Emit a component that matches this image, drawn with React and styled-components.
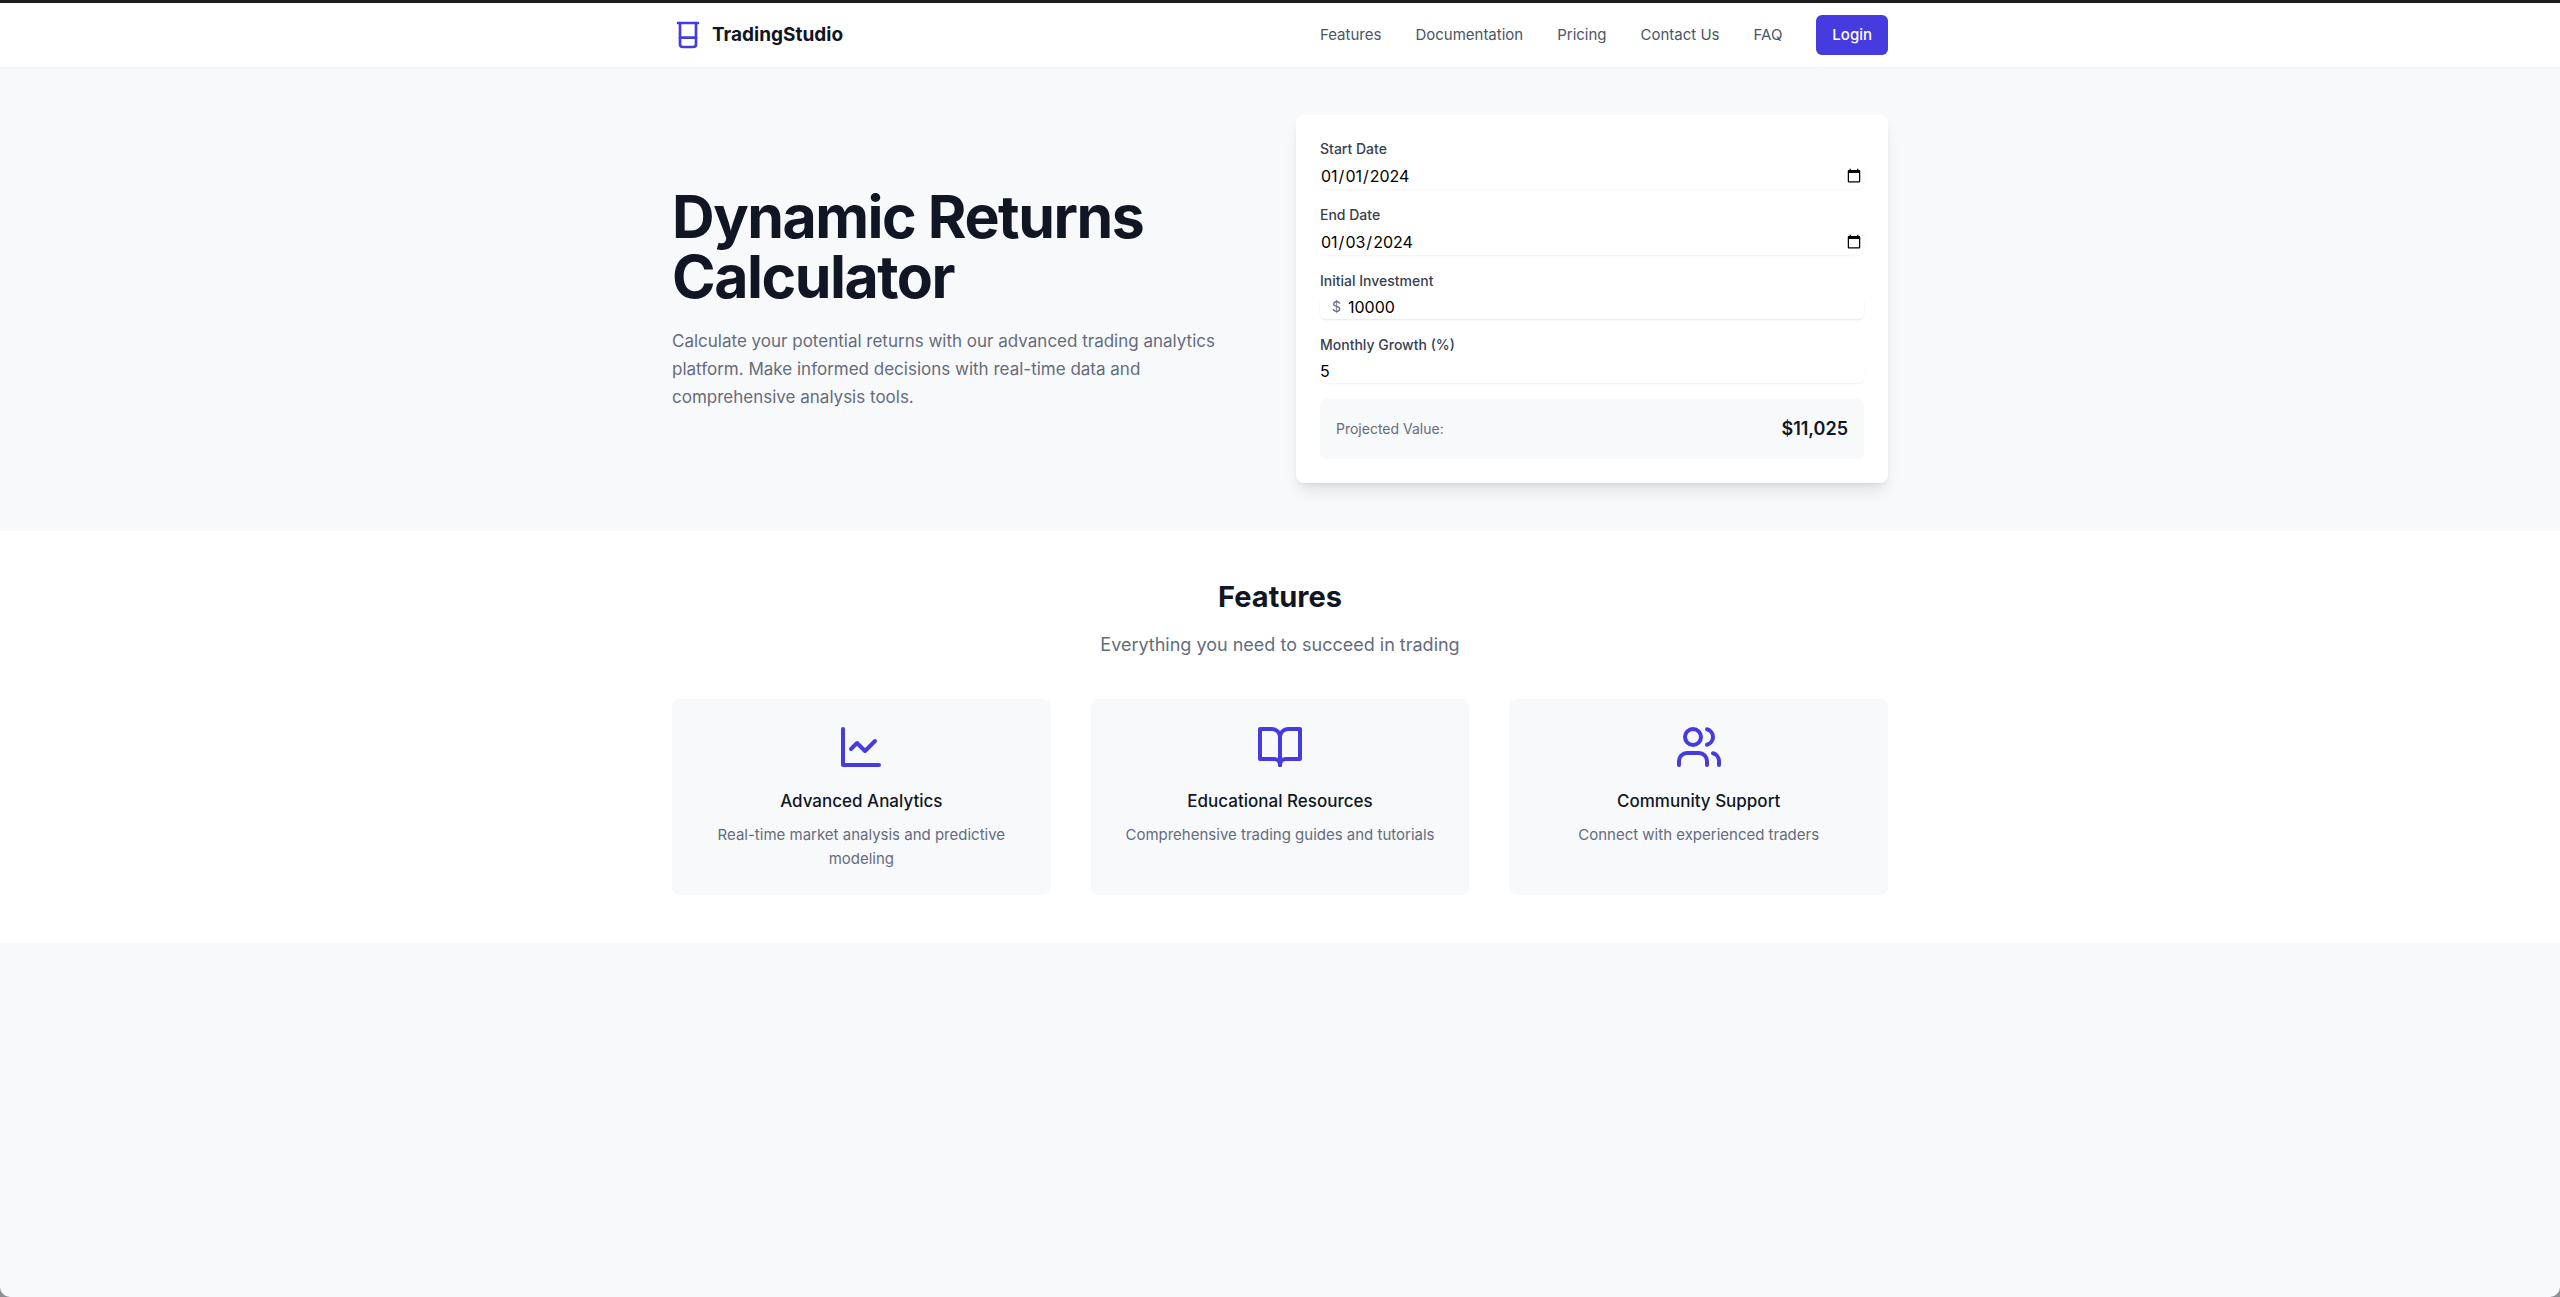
import React, { useState } from "react";
import styled, { createGlobalStyle } from "styled-components";
import { Users } from "lucide-react";

const color = {
  ink: "#111624",
  label: "#374151",
  nav: "#4b5563",
  muted: "#646c7c",
  accent: "#463bdf",
  page: "#f8f9fb",
};

const GlobalStyle = createGlobalStyle`
  *, *::before, *::after { box-sizing: border-box; }
  body {
    margin: 0;
    background: #8e8e92;
    font-family: Inter, "Liberation Sans", sans-serif;
    font-size: 15px;
    line-height: 24px;
    -webkit-font-smoothing: antialiased;
  }
  h1, h2, h3, p { margin: 0; }
  input, button { font: inherit; }
`;

const Page = styled.div`
  min-height: 100vh;
  background: ${color.page};
  border-top: 3px solid #1f1c1e;
  border-radius: 0 0 10px 10px;
  overflow: hidden;
`;

const Container = styled.div`
  max-width: 1280px;
  margin: 0 auto;
  padding: 0 32px;
`;

const Header = styled.header`
  position: relative;
  background: #fff;
  box-shadow: 0 1px 2px rgba(0, 0, 0, 0.05);
`;

const HeaderRow = styled(Container)`
  display: flex;
  align-items: center;
  justify-content: space-between;
  height: 64px;
`;

const Brand = styled.a`
  display: flex;
  align-items: center;
  gap: 8px;
  color: ${color.ink};
  font-size: 19px;
  font-weight: 700;
  line-height: 28px;
  text-decoration: none;
  svg { color: ${color.accent}; }
`;

const Nav = styled.nav`
  display: flex;
  align-items: center;
  gap: 34px;
`;

const NavLink = styled.a`
  color: ${color.nav};
  text-decoration: none;
`;

const LoginButton = styled.button`
  padding: 8px 16px;
  border: 0;
  border-radius: 6px;
  background: ${color.accent};
  color: #fff;
  font-weight: 500;
  cursor: pointer;
`;

const Hero = styled.section`
  padding: 48px 0;
`;

const HeroGrid = styled(Container)`
  display: grid;
  grid-template-columns: 1fr 1fr;
  gap: 32px;
  align-items: center;
`;

const HeroTitle = styled.h1`
  color: ${color.ink};
  font-size: 59px;
  font-weight: 700;
  line-height: 60px;
  letter-spacing: -0.025em;
`;

const HeroText = styled.p`
  margin-top: 20px;
  max-width: 576px;
  color: ${color.muted};
  font-size: 17px;
  line-height: 28px;
`;

const Calculator = styled.form`
  display: grid;
  gap: 16px;
  padding: 24px;
  border-radius: 8px;
  background: #fff;
  box-shadow: 0 10px 15px -3px rgba(0, 0, 0, 0.1), 0 4px 6px -4px rgba(0, 0, 0, 0.1);
`;

const Field = styled.div`
  display: grid;
  gap: 4px;
`;

const Label = styled.label`
  color: ${color.label};
  font-size: 14px;
  font-weight: 500;
  line-height: 20px;
`;

const Input = styled.input`
  display: block;
  width: 100%;
  height: ${(p) => (p.type === "date" ? "26px" : "24px")};
  padding: 0 0 0 ${(p) => (p.$prefixed ? "28px" : "0")};
  border: 0;
  border-radius: 6px;
  background: #fff;
  color: #000;
  font-size: 16px;
  box-shadow: 0 1px 2px rgba(0, 0, 0, 0.05);
  appearance: ${(p) => (p.type === "number" ? "textfield" : "auto")};
`;

const MoneyBox = styled.div`
  position: relative;
  border-radius: 6px;
  box-shadow: 0 1px 2px rgba(0, 0, 0, 0.05);
`;

const MoneySign = styled.span`
  position: absolute;
  inset: 0 auto 0 0;
  display: flex;
  align-items: center;
  padding-left: 12px;
  color: ${color.muted};
  font-size: 14px;
  pointer-events: none;
`;

const Result = styled.div`
  display: flex;
  align-items: center;
  justify-content: space-between;
  padding: 16px;
  border-radius: 6px;
  background: ${color.page};
`;

const ResultLabel = styled.span`
  color: ${color.muted};
  font-size: 14px;
  line-height: 20px;
`;

const ResultValue = styled.output`
  color: ${color.ink};
  font-size: 18px;
  font-weight: 600;
  line-height: 28px;
`;

const Features = styled.section`
  padding: 48px 0;
  background: #fff;
  text-align: center;
`;

const SectionTitle = styled.h2`
  color: ${color.ink};
  font-size: 29px;
  font-weight: 700;
  line-height: 36px;
`;

const SectionText = styled.p`
  margin-top: 16px;
  color: ${color.muted};
  font-size: 18px;
  line-height: 28px;
`;

const FeatureGrid = styled.div`
  display: grid;
  grid-template-columns: repeat(3, 1fr);
  gap: 40px;
  margin-top: 40px;
`;

const FeatureCard = styled.article`
  display: flex;
  flex-direction: column;
  align-items: center;
  padding: 24px;
  border-radius: 8px;
  background: ${color.page};
  svg { color: ${color.accent}; }
`;

const FeatureTitle = styled.h3`
  margin-top: 16px;
  color: ${color.ink};
  font-size: 17px;
  font-weight: 500;
  line-height: 28px;
`;

const FeatureText = styled.p`
  margin-top: 8px;
  color: ${color.muted};
`;

const StrokeSvg = styled.svg`
  fill: none;
  stroke: currentColor;
  stroke-width: 2;
  stroke-linecap: round;
  stroke-linejoin: round;
`;

const BeakerIcon = () => (
  <StrokeSvg width="32" height="32" viewBox="0 0 24 24" aria-hidden="true">
    <path d="M4.5 3h15" />
    <path d="M6 3v16a2 2 0 0 0 2 2h8a2 2 0 0 0 2-2V3" />
    <path d="M6 14h12" />
  </StrokeSvg>
);

const ChartIcon = () => (
  <StrokeSvg width="48" height="48" viewBox="0 0 24 24" aria-hidden="true">
    <path d="M3 3v18h18" />
    <path d="m19 9-5 5-4-4-3 3" />
  </StrokeSvg>
);

const BookIcon = () => (
  <StrokeSvg width="48" height="48" viewBox="0 0 24 24" aria-hidden="true">
    <path d="M2 3h6a4 4 0 0 1 4 4v14a3 3 0 0 0-3-3H2z" />
    <path d="M22 3h-6a4 4 0 0 0-4 4v14a3 3 0 0 1 3-3h7z" />
  </StrokeSvg>
);

const links = ["Features", "Documentation", "Pricing", "Contact Us", "FAQ"];

const features = [
  { icon: <ChartIcon />, title: "Advanced Analytics", text: "Real-time market analysis and predictive modeling" },
  { icon: <BookIcon />, title: "Educational Resources", text: "Comprehensive trading guides and tutorials" },
  { icon: <Users size={48} aria-hidden="true" />, title: "Community Support", text: "Connect with experienced traders" },
];

export default function App() {
  const [start, setStart] = useState("2024-01-01");
  const [end, setEnd] = useState("2024-01-03");
  const [amount, setAmount] = useState("10000");
  const [growth, setGrowth] = useState("5");
  const projected = Math.round(Number(amount) * (1 + Number(growth) / 100) ** 2);

  return (
    <>
      <GlobalStyle />
      <Page>
        <Header>
          <HeaderRow>
            <Brand href="#">
              <BeakerIcon />
              TradingStudio
            </Brand>
            <Nav>
              {links.map((link) => (
                <NavLink key={link} href="#">{link}</NavLink>
              ))}
              <LoginButton type="button">Login</LoginButton>
            </Nav>
          </HeaderRow>
        </Header>
        <main>
          <Hero>
            <HeroGrid>
              <div>
                <HeroTitle>Dynamic Returns Calculator</HeroTitle>
                <HeroText>
                  Calculate your potential returns with our advanced trading analytics platform. Make
                  informed decisions with real-time data and comprehensive analysis tools.
                </HeroText>
              </div>
              <Calculator>
                <Field>
                  <Label htmlFor="start">Start Date</Label>
                  <Input id="start" type="date" value={start} onChange={(e) => setStart(e.target.value)} />
                </Field>
                <Field>
                  <Label htmlFor="end">End Date</Label>
                  <Input id="end" type="date" value={end} onChange={(e) => setEnd(e.target.value)} />
                </Field>
                <Field>
                  <Label htmlFor="amount">Initial Investment</Label>
                  <MoneyBox>
                    <Input id="amount" type="number" $prefixed value={amount} onChange={(e) => setAmount(e.target.value)} />
                    <MoneySign>$</MoneySign>
                  </MoneyBox>
                </Field>
                <Field>
                  <Label htmlFor="growth">Monthly Growth (%)</Label>
                  <Input id="growth" type="number" value={growth} onChange={(e) => setGrowth(e.target.value)} />
                </Field>
                <Result>
                  <ResultLabel>Projected Value:</ResultLabel>
                  <ResultValue htmlFor="amount growth">${projected.toLocaleString("en-US")}</ResultValue>
                </Result>
              </Calculator>
            </HeroGrid>
          </Hero>
          <Features>
            <Container>
              <SectionTitle>Features</SectionTitle>
              <SectionText>Everything you need to succeed in trading</SectionText>
              <FeatureGrid>
                {features.map((feature) => (
                  <FeatureCard key={feature.title}>
                    {feature.icon}
                    <FeatureTitle>{feature.title}</FeatureTitle>
                    <FeatureText>{feature.text}</FeatureText>
                  </FeatureCard>
                ))}
              </FeatureGrid>
            </Container>
          </Features>
        </main>
      </Page>
    </>
  );
}
